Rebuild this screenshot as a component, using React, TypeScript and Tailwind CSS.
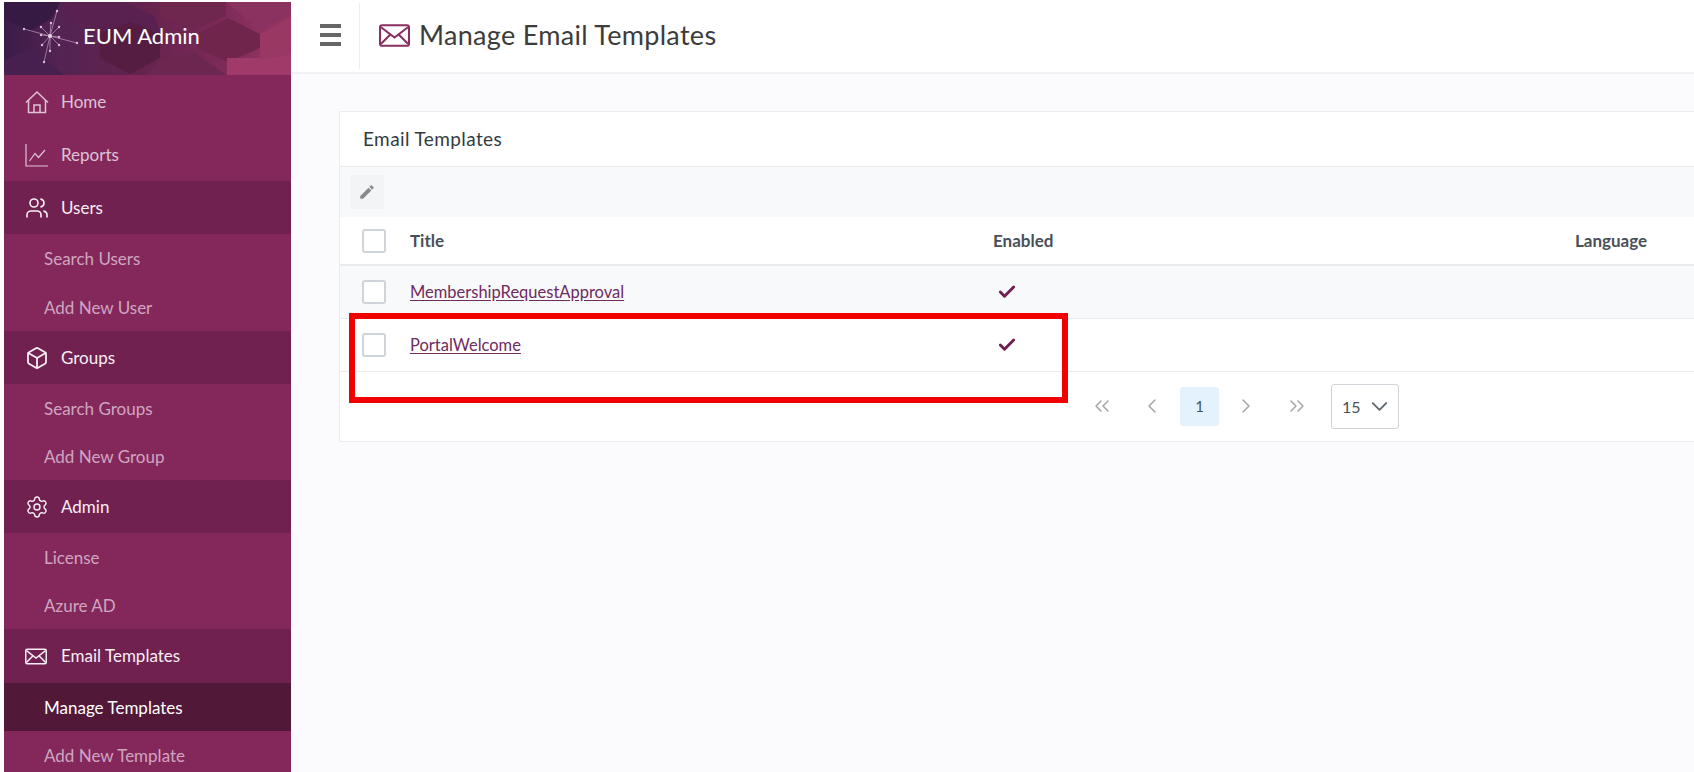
import { Box, ChevronDown, ChevronLeft, ChevronRight, ChevronsLeft, ChevronsRight, Check, Settings, Users } from "lucide-react";
import { MdEdit } from "react-icons/md";

const font = "font-['Lato','Noto_Sans',sans-serif]";

function MailIcon({ className }: { className: string }) {
	return (
		<svg viewBox="0 0 30 22" fill="none" stroke="currentColor" strokeWidth="2" className={className}>
			<rect x="1" y="1" width="28" height="20" rx="2" />
			<path d="M2 3l13 10L28 3M2 19l9-9M28 19l-9-9" />
		</svg>
	);
}

function HomeIcon() {
	return (
		<svg viewBox="0 0 24 24" fill="none" stroke="currentColor" strokeWidth="1.5" className="w-[24px] h-[24px]">
			<path d="M1 12.5L12 2l11 10.5" />
			<path d="M3.5 10v12.5h17V10" />
			<path d="M9 22.5V15h6v7.5" />
		</svg>
	);
}

function ChartIcon() {
	return (
		<svg viewBox="0 0 24 24" fill="none" stroke="currentColor" strokeWidth="1.2" className="w-[24px] h-[24px]">
			<path d="M1 1v22h22" />
			<path d="M4.5 18L10 10.5l3.5 4L20 7" />
		</svg>
	);
}

function Banner() {
	return (
		<svg viewBox="0 0 287 73" preserveAspectRatio="none" className="absolute inset-0 w-full h-full">
			<defs>
				<linearGradient id="bannerBg" x1="0" x2="1" y1="0" y2="0">
					<stop offset="0" stopColor="#3a1c48" />
					<stop offset="0.2" stopColor="#542352" />
					<stop offset="0.5" stopColor="#65234e" />
					<stop offset="0.75" stopColor="#7c2a58" />
					<stop offset="1" stopColor="#983764" />
				</linearGradient>
			</defs>
			<rect width="287" height="73" fill="url(#bannerBg)" />
			<polygon points="0,0 56,0 48,16 25,30 0,16" fill="#361a43" />
			<polygon points="58,0 120,0 150,14 156,30 126,42 96,30 64,14" fill="#58214f" />
			<polygon points="96,32 126,20 156,32 156,56 126,72 96,56" fill="#561d42" />
			<polygon points="156,0 222,0 222,14 190,28 156,14" fill="#70274f" />
			<polygon points="193,32 224,16 256,32 256,46 224,60 193,46" fill="#70264c" />
			<polygon points="223,56 256,56 287,50 287,73 223,73" fill="#a03a68" />
			<polygon points="256,32 287,16 287,52 256,58" fill="#9a3864" />
			<polygon points="222,0 287,0 287,14 256,28" fill="#8a3260" />
			<polygon points="0,58 28,46 60,73 0,73" fill="#482050" />
			<polygon points="156,58 190,50 222,73 140,73" fill="#6c2750" />
		</svg>
	);
}

function StarLogo() {
	const rays: [number, number][] = [
		[56, 10], [50, 22], [58, 26], [23, 28], [40, 26], [40, 34], [76, 42], [58, 36], [41, 44], [49, 50], [43, 61], [58, 44],
	];
	return (
		<svg viewBox="0 0 80 70" className="relative w-[80px] h-[70px] shrink-0 -ml-[3px]">
			{rays.map(([x, y], i) => (
				<g key={i}>
					<line x1="49" y1="35" x2={x} y2={y} stroke="#d3b0cc" strokeWidth="0.6" />
					<circle cx={x} cy={y} r="1.2" fill="#dcbdd6" />
				</g>
			))}
			<circle cx="49" cy="35" r="2" fill="#e8d2e4" />
		</svg>
	);
}

function Parent({ icon, label, dark, tall }: { icon: React.ReactNode; label: string; dark?: boolean; tall?: boolean }) {
	return (
		<div className={`${tall ? "h-[54px]" : "h-[53px]"} flex items-center pl-[21px] text-[17px] ${dark ? "bg-[#71214f] text-[#f8eef5]" : "text-[#dfc2d5]"}`}>
			<span className="w-[36px] shrink-0 flex">{icon}</span>
			{label}
		</div>
	);
}

function Sub({ label, active, tall }: { label: string; active?: boolean; tall?: boolean }) {
	return (
		<div className={`${tall ? "h-[49px]" : "h-[48px]"} pt-[2px] flex items-center pl-[40px] text-[17px] ${active ? "bg-[#521838] text-white" : "text-[#d0a5c0]"}`}>
			{label}
		</div>
	);
}

function Checkbox() {
	return <div className="w-[24px] h-[24px] rounded-[3px] border-2 border-[#ced4da] bg-white shrink-0" />;
}

function Row({ title, bg }: { title: string; bg: string }) {
	return (
		<div className={`flex items-center pl-[22px] border-b border-[#e9ecef] h-[53px] ${bg}`}>
			<span className="w-[48px] shrink-0"><Checkbox /></span>
			<span className="w-[583px] shrink-0 text-[16.5px] text-[#6f2a5e] underline underline-offset-2">{title}</span>
			<Check className="ml-[4px] -mt-[1px] w-[20px] h-[20px] text-[#6f2050]" strokeWidth={3.5} />
		</div>
	);
}

export default function App() {
	const iconCls = "w-[24px] h-[24px]";
	return (
		<div className={`${font} w-[1694px] h-[772px] overflow-hidden flex bg-white`}>
			<aside className="ml-[4px] mt-[2px] w-[287px] shrink-0 bg-[#84285c] overflow-hidden">
				<div className="relative h-[73px] pb-[6px] flex items-center overflow-hidden">
					<Banner />
					<StarLogo />
					<span className="relative ml-[2px] text-[22px] text-white">EUM Admin</span>
				</div>
				<Parent icon={<HomeIcon />} label="Home" />
				<Parent icon={<ChartIcon />} label="Reports" />
				<Parent dark icon={<Users className={iconCls} strokeWidth={1.6} />} label="Users" />
				<Sub label="Search Users" />
				<Sub tall label="Add New User" />
				<Parent dark icon={<Box className={iconCls} strokeWidth={1.8} />} label="Groups" />
				<Sub label="Search Groups" />
				<Sub label="Add New Group" />
				<Parent dark icon={<Settings className={iconCls} strokeWidth={1.4} />} label="Admin" />
				<Sub label="License" />
				<Sub label="Azure AD" />
				<Parent dark tall icon={<MailIcon className="w-[22px] h-[17px]" />} label="Email Templates" />
				<Sub active label="Manage Templates" />
				<Sub label="Add New Template" />
			</aside>
			<main className="flex-1 min-w-0 flex flex-col">
				<header className="h-[74px] shrink-0 flex items-center border-b-2 border-[#f1f1f5] bg-white">
					<div className="w-[69px] h-[66px] shrink-0 flex items-center pl-[29px] border-r border-[#eeeeee]">
						<div className="w-[21px] -mt-[2px] flex flex-col gap-[5px]">
							<div className="h-[4px] bg-[#666666]" />
							<div className="h-[4px] bg-[#666666]" />
							<div className="h-[4px] bg-[#666666]" />
						</div>
					</div>
					<MailIcon className="ml-[19px] -mt-[2px] w-[31px] h-[23px] text-[#8a2f62]" />
					<h1 className="ml-[9px] -mt-[2px] text-[27px] tracking-[0.3px] text-[#3c3c3c]">Manage Email Templates</h1>
				</header>
				<div className="flex-1 bg-[#fbfbfe] pt-[37px] pl-[48px]">
					<section className="relative w-[1400px] h-[331px] bg-white border border-[#ecedf2] border-r-0">
						<div className="h-[55px] flex items-center pl-[23px] text-[19px] tracking-[0.4px] text-[#333b3f] border-b border-[#e9ecef]">Email Templates</div>
						<div className="h-[50px] flex items-center pl-[10px] bg-[#f8f9fa]">
							<div className="w-[34px] h-[34px] bg-[#f3f4f5] flex items-center justify-center">
								<MdEdit className="w-[18px] h-[18px] text-[#8a8a8a]" />
							</div>
						</div>
						<div className="h-[49px] flex items-center pl-[22px] border-b-2 border-[#e9ecef] text-[17px] font-bold text-[#495057]">
							<span className="w-[48px] shrink-0"><Checkbox /></span>
							<span className="w-[583px] shrink-0 pt-[1px]">Title</span>
							<span className="w-[582px] shrink-0 pt-[1px]">Enabled</span>
							<span className="pt-[1px]">Language</span>
						</div>
						<Row title="MembershipRequestApproval" bg="bg-[#f8f9fa]" />
						<Row title="PortalWelcome" bg="bg-white" />
						<div className="flex items-center h-[68px] pl-[750px] text-[#a0a6ac]">
							<ChevronsLeft className="w-[24px] h-[24px]" strokeWidth={1.5} />
							<ChevronLeft className="ml-[26px] w-[24px] h-[24px]" strokeWidth={1.5} />
							<div className="ml-[16px] w-[39px] h-[39px] rounded-[3px] bg-[#e3f2fd] text-[#495057] text-[15px] flex items-center justify-center">1</div>
							<ChevronRight className="ml-[15px] w-[24px] h-[24px]" strokeWidth={1.5} />
							<ChevronsRight className="ml-[27px] w-[24px] h-[24px]" strokeWidth={1.5} />
							<div className="ml-[22px] w-[68px] h-[45px] rounded-[3px] border border-[#ced4da] flex items-center justify-between pl-[10px] pr-[5px] text-[#495057] text-[16px]">
								<span className="pt-[2px]">15</span>
								<ChevronDown className="w-[27px] h-[27px] text-[#5f6770]" strokeWidth={1.7} />
							</div>
						</div>
						<div className="absolute left-[9px] top-[201px] w-[719px] h-[90px] border-[6px] border-[#f00000]" />
					</section>
				</div>
			</main>
		</div>
	);
}
